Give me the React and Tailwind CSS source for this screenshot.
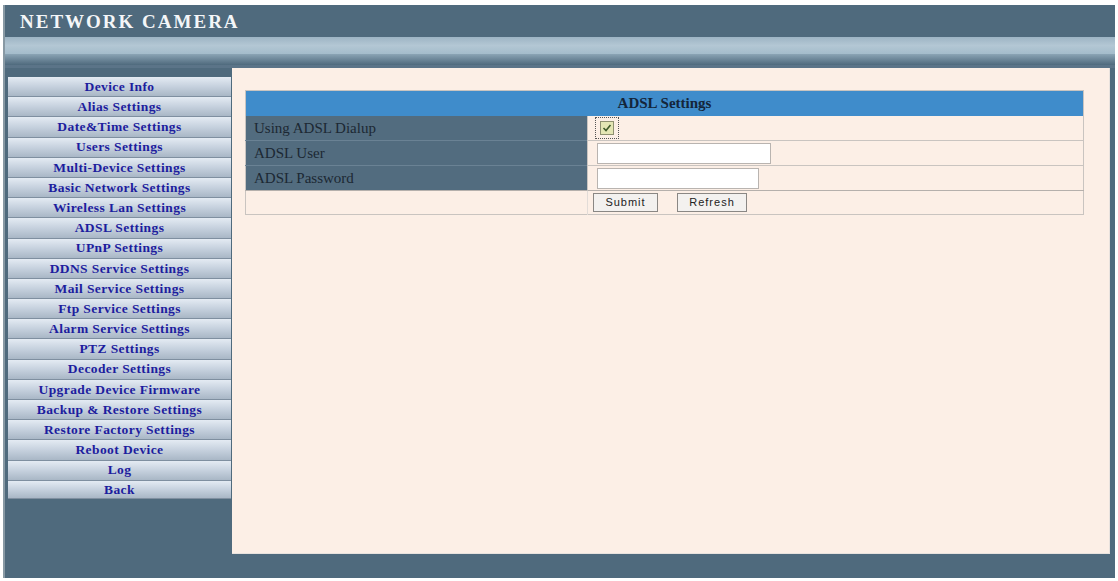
const menu = [
  'Device Info',
  'Alias Settings',
  'Date&Time Settings',
  'Users Settings',
  'Multi-Device Settings',
  'Basic Network Settings',
  'Wireless Lan Settings',
  'ADSL Settings',
  'UPnP Settings',
  'DDNS Service Settings',
  'Mail Service Settings',
  'Ftp Service Settings',
  'Alarm Service Settings',
  'PTZ Settings',
  'Decoder Settings',
  'Upgrade Device Firmware',
  'Backup & Restore Settings',
  'Restore Factory Settings',
  'Reboot Device',
  'Log',
  'Back',
];

const serif = { fontFamily: '"Liberation Serif", "DejaVu Serif", serif' };

export default function App() {
  return (
    <div className="w-[1118px] h-[581px] bg-white pt-[5px] pl-[3px] pr-[3px] pb-[3px]">
      <div className="h-full flex flex-col bg-[#4f6a7d] border-l-[2px] border-[#8899a4]">
        {/* HEADER */}
        <div className="h-[32px] flex items-center pl-[15px]">
          <span
            className="text-[#f4f6f8] font-bold text-[19px] tracking-[2px] leading-none"
            style={serif}
          >
            NETWORK CAMERA
          </span>
        </div>

        {/* GRADIENT BAR */}
        <div className="h-[31px] flex flex-col">
          <div className="h-[17px] bg-gradient-to-b from-[#9db4c4] via-[#b3c7d4] to-[#a4bccb]" />
          <div className="h-[11px] bg-gradient-to-b from-[#8ba4b5] to-[#4f6a7d]" />
          <div className="h-[3px] bg-[#5b7488]" />
        </div>

        {/* BODY */}
        <div className="flex-1 flex pb-[24px] pr-[5px]">
          {/* SIDEBAR */}
          <div className="w-[223px] ml-[3px] pt-[9px] mr-[1px]">
            {menu.map((m, i) => (
              <div
                key={m}
                className={`${i === menu.length - 1 ? 'h-[18px]' : 'h-[20.2px]'} flex items-center justify-center bg-gradient-to-b from-[#e4ebf3] via-[#c6d1de] to-[#a9b7c6] border-b border-[#7f8fa0]`}
              >
                <span className="text-[#1d1d9e] font-bold text-[13.5px] tracking-[0.4px] leading-none" style={serif}>
                  {m}
                </span>
              </div>
            ))}
          </div>

          {/* MAIN */}
          <div className="flex-1 bg-[#fcefe6] border-r border-b border-[#e8e2de] pt-[22px] pl-[13px] pr-[25px]">
            <table className="w-full border-collapse border border-[#c9c4c0]" style={serif}>
              <tbody>
                <tr>
                  <td colSpan={2} className="h-[25px] bg-[#3f8ccb] text-center text-[15px] font-bold text-[#14253a]">
                    ADSL Settings
                  </td>
                </tr>
                <tr className="border-b border-[#c9c4c0]">
                  <td className="w-[342px] h-[25px] bg-[#526c7f] pl-[8px] text-[15px] text-[#1c2833] border-r border-[#c9c4c0]">
                    Using ADSL Dialup
                  </td>
                  <td className="pl-[7px]">
                    <div className="w-[24px] h-[22px] border border-dotted border-[#555] flex items-center justify-center">
                      <div className="w-[14px] h-[14px] bg-[#e4e6b4] border border-[#8e9070] flex items-center justify-center">
                        <svg width="10" height="10" viewBox="0 0 10 10">
                          <path d="M1.5 5 L4 7.5 L8.5 2" fill="none" stroke="#3f5a2a" strokeWidth="1.6" />
                        </svg>
                      </div>
                    </div>
                  </td>
                </tr>
                <tr className="border-b border-[#c9c4c0]">
                  <td className="h-[25px] bg-[#526c7f] pl-[8px] text-[15px] text-[#1c2833] border-r border-[#c9c4c0] border-t border-t-[#6a8294]">
                    ADSL User
                  </td>
                  <td className="pl-[9px]">
                    <div className="w-[174px] h-[21px] bg-white border border-[#b9b4b0]" />
                  </td>
                </tr>
                <tr className="border-b border-[#b5b0ac]">
                  <td className="h-[25px] bg-[#526c7f] pl-[8px] text-[15px] text-[#1c2833] border-r border-[#c9c4c0] border-t border-t-[#6a8294]">
                    ADSL Password
                  </td>
                  <td className="pl-[9px]">
                    <div className="w-[162px] h-[21px] bg-white border border-[#b9b4b0]" />
                  </td>
                </tr>
                <tr>
                  <td className="h-[24px] border-r border-[#e2dcd8]" />
                  <td className="pl-[5px]">
                    <div className="flex gap-[19px]" style={{ fontFamily: '"Liberation Sans", Arial, sans-serif' }}>
                      <span className="w-[65px] h-[19px] flex items-center justify-center bg-[#f3f1ef] border border-[#8a8784] text-[11px] tracking-[1px] text-[#222]">
                        Submit
                      </span>
                      <span className="w-[70px] h-[19px] flex items-center justify-center bg-[#f3f1ef] border border-[#8a8784] text-[11px] tracking-[1px] text-[#222]">
                        Refresh
                      </span>
                    </div>
                  </td>
                </tr>
              </tbody>
            </table>
          </div>
        </div>
      </div>
    </div>
  );
}
